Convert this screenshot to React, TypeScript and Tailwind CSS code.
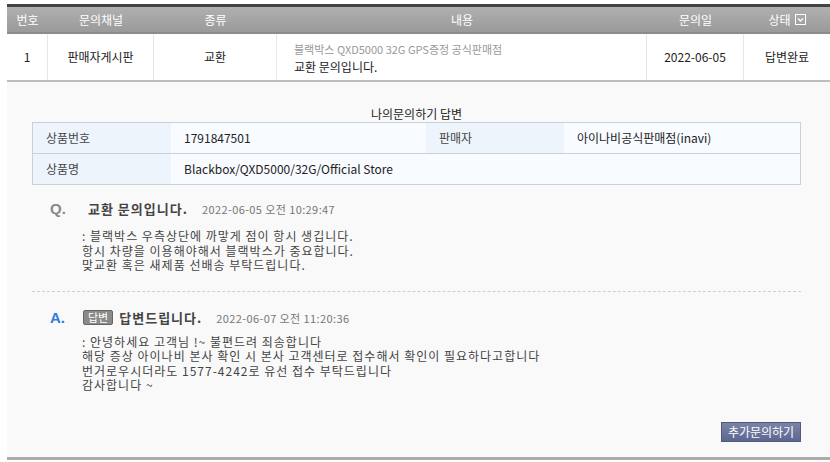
export default function App() {
  const font = {
    fontFamily: '"Noto Sans CJK KR", "Noto Sans", "Liberation Sans", sans-serif',
  };

  return (
    <div className="h-[462px] w-[830px] overflow-hidden bg-white pl-[7px] text-[12px] text-[#333]" style={font}>
      {/* top bar */}
      <div className="h-[3px] bg-[#444] mt-[4px]" />
      <div className="flex h-[27px] items-center border-b-[2px] border-[#8c8c8c] bg-gradient-to-b from-[#b0b0b0] to-[#9a9a9a] text-white">
        <div className="w-[41px] text-center">번호</div>
        <div className="w-[106px] text-center">문의채널</div>
        <div className="w-[123px] text-center">종류</div>
        <div className="w-[370px] text-center">내용</div>
        <div className="w-[97px] text-center">문의일</div>
        <div className="flex flex-1 items-center justify-center gap-[4px]">
          상태
          <svg width="11" height="11" viewBox="0 0 11 11">
            <rect x="0.5" y="0.5" width="10" height="10" fill="none" stroke="white" />
            <path d="M3 4.5 L5.5 7 L8 4.5" fill="none" stroke="white" strokeWidth="1.4" />
          </svg>
        </div>
      </div>

      {/* row */}
      <div className="flex h-[48px] border-b-[2px] border-[#bdbdbd] text-[#222]">
        <div className="flex w-[41px] items-center justify-center border-r border-[#e6e6e6]">1</div>
        <div className="flex w-[106px] items-center justify-center border-r border-[#e6e6e6]">판매자게시판</div>
        <div className="flex w-[123px] items-center justify-center border-r border-[#e6e6e6]">교환</div>
        <div className="flex w-[370px] flex-col justify-center border-r border-[#e6e6e6] pl-[17px] pt-[2px] leading-[18px]">
          <span className="text-[11px] text-[#999]">블랙박스 QXD5000 32G GPS증정 공식판매점</span>
          <span>교환 문의입니다.</span>
        </div>
        <div className="flex w-[97px] items-center justify-center border-r border-[#e6e6e6]">2022-06-05</div>
        <div className="flex flex-1 items-center justify-center">답변완료</div>
      </div>

      {/* detail */}
      <div className="flex h-[378px] flex-col border-b-[3px] border-[#ababab] bg-[#f9f9f9] pl-[25px] pr-[29px]">
        <div className="mt-[24px] text-center leading-[16px] text-[#222]">나의문의하기 답변</div>
        <div className="border border-[#c8d0da] bg-[#f8fbff] text-[#222]">
          <div className="flex h-[31px] items-center border-b border-[#c8d0da]">
            <div className="flex h-full w-[138px] items-center bg-[#edf4fc] pl-[13px] text-[#444]">상품번호</div>
            <div className="w-[255px] pl-[13px]">1791847501</div>
            <div className="flex h-full w-[138px] items-center bg-[#edf4fc] pl-[13px] text-[#444]">판매자</div>
            <div className="pl-[13px]">아이나비공식판매점(inavi)</div>
          </div>
          <div className="flex h-[30px] items-center">
            <div className="flex h-full w-[138px] items-center bg-[#edf4fc] pl-[13px] text-[#444]">상품명</div>
            <div className="pl-[13px]">Blackbox/QXD5000/32G/Official Store</div>
          </div>
        </div>

        {/* Q */}
        <div className="mt-[15px] flex items-center pl-[18px] leading-[18px]">
          <span className="w-[38px] text-[15px] font-bold text-[#888]" style={{ fontFamily: '"Liberation Sans", sans-serif' }}>Q.</span>
          <span className="text-[13px] font-bold tracking-[1px] text-[#444]">교환 문의입니다.</span>
          <span className="ml-[14px] text-[11px] tracking-[0.4px] text-[#777]">2022-06-05 오전 10:29:47</span>
        </div>
        <div className="mt-[11px] pl-[50px] leading-[14.5px] tracking-[1px] text-[#444]">
          <div>: 블랙박스 우측상단에 까맣게 점이 항시 생깁니다.</div>
          <div>항시 차량을 이용해야해서 블랙박스가 중요합니다.</div>
          <div>맞교환 혹은 새제품 선배송 부탁드립니다.</div>
        </div>
        <div className="mt-[18px] border-t border-dashed border-[#cfcfcf]" />

        {/* A */}
        <div className="mt-[17px] flex items-center pl-[18px] leading-[18px]">
          <span className="w-[33px] text-[15px] font-bold text-[#2f7ce0]" style={{ fontFamily: '"Liberation Sans", sans-serif' }}>A.</span>
          <span className="mr-[6px] rounded-[2px] border border-[#666] bg-[#8a8a8a] px-[4px] text-[11px] leading-[13px] text-white">답변</span>
          <span className="text-[13px] font-bold tracking-[1px] text-[#444]">답변드립니다.</span>
          <span className="ml-[14px] text-[11px] tracking-[0.4px] text-[#777]">2022-06-07 오전 11:20:36</span>
        </div>
        <div className="mt-[8px] pl-[50px] leading-[14.5px] tracking-[1px] text-[#444]">
          <div>: 안녕하세요 고객님 !~ 불편드려 죄송합니다</div>
          <div>해당 증상 아이나비 본사 확인 시 본사 고객센터로 접수해서 확인이 필요하다고합니다</div>
          <div>번거로우시더라도 1577-4242로 유선 접수 부탁드립니다</div>
          <div>감사합니다 ~</div>
        </div>

        <div className="mt-auto mb-[15px] flex justify-end">
          <button className="h-[20px] w-[80px] border border-[#4f5a7e] bg-gradient-to-b from-[#7b84a6] to-[#5d6690] text-[12px] leading-[18px] text-white">
            추가문의하기
          </button>
        </div>
      </div>
    </div>
  );
}
